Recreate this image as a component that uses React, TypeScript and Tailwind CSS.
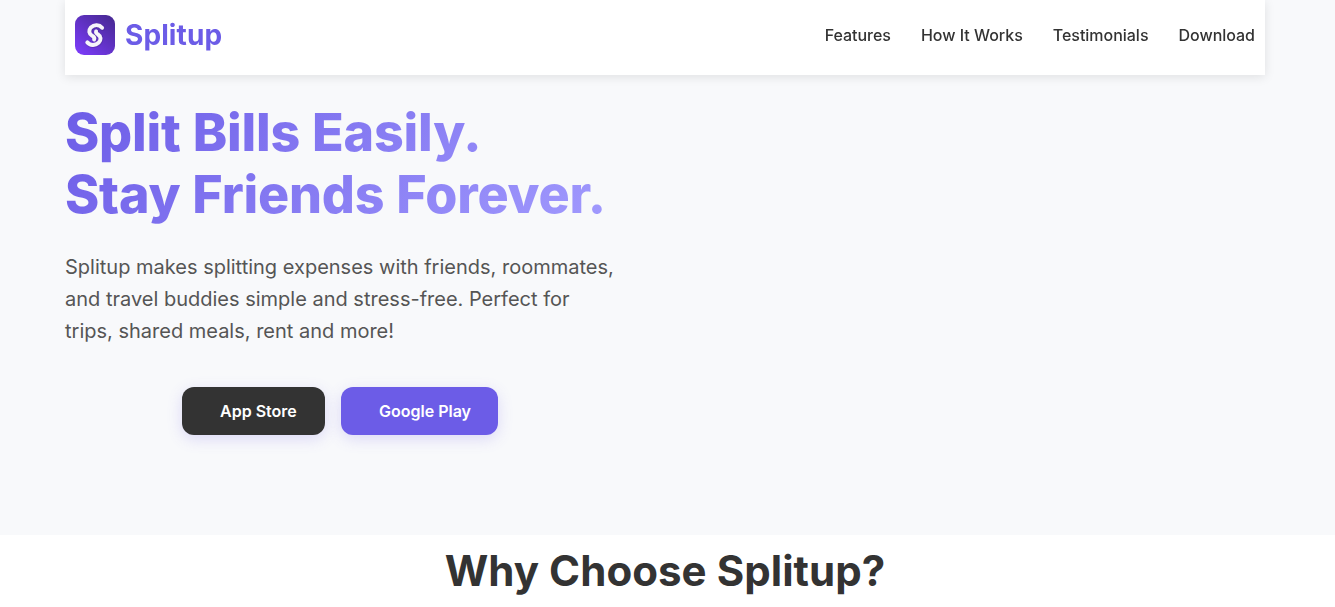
const navLinks = [
  { label: 'Features', href: '#features' },
  { label: 'How It Works', href: '#how-it-works' },
  { label: 'Testimonials', href: '#testimonials' },
  { label: 'Download', href: '#download' },
];

const stores = [
  { label: 'App Store', className: 'w-[143px] bg-[#333333]' },
  { label: 'Google Play', className: 'w-[157px] bg-[#6c5ce7]' },
];

const Logo = () => (
  <svg className="w-10 h-10" viewBox="0 0 40 40" fill="none">
    <defs>
      <linearGradient id="logo-bg" x1="4" y1="38" x2="34" y2="2" gradientUnits="userSpaceOnUse">
        <stop offset="0" stopColor="#7a3bf6" />
        <stop offset="1" stopColor="#4a2a98" />
      </linearGradient>
      <filter id="logo-shadow" x="-30%" y="-30%" width="160%" height="160%">
        <feDropShadow dx="0.4" dy="0.4" stdDeviation="0.6" floodColor="#1d0c4d" floodOpacity="0.5" />
      </filter>
    </defs>
    <rect width="40" height="40" rx="9" fill="url(#logo-bg)" />
    <g filter="url(#logo-shadow)" stroke="#f6f4fa" strokeWidth="3.9" strokeLinecap="round" strokeLinejoin="round">
      <path d="M27.1 12.7C24.2 9.4 19 9.4 16 12.3C13.2 15.4 14 18.8 17 20.6C18.9 21.7 19.8 22.7 19.1 24.4" />
      <path d="M21.1 16.4C20.6 17.8 21.4 18.4 23 19.5C26 21.4 26.4 24.9 23.6 27.7C20.4 30.8 15.2 30.7 12.3 27.4" />
    </g>
  </svg>
);

const Header = () => (
  <header className="relative z-10 mx-auto flex h-[75px] w-[1200px] items-start justify-between bg-white/95 px-2.5 pt-[15px] shadow-[0_2px_10px_rgba(0,0,0,0.1)] backdrop-blur-[10px]">
    <a href="#" className="flex h-10 items-center gap-2.5 text-[28px] font-bold tracking-[0.1px] text-[#6c5ce7]">
      <Logo />
      Splitup
    </a>
    <nav className="flex h-10 items-center gap-[30px]">
      {navLinks.map((link) => (
        <a key={link.label} href={link.href} className="font-medium tracking-[-0.02px] text-[#333333]">
          {link.label}
        </a>
      ))}
    </nav>
  </header>
);

const Hero = () => (
  <section className="mx-auto h-[460px] w-[1200px] pt-[27px]">
    <div className="w-[550px]">
      <h1 className="mb-6 bg-linear-[135deg,#6c5ce7,#a29bfe] bg-clip-text text-[52px] leading-[1.2] font-extrabold tracking-[-0.22px] text-transparent [word-spacing:0.8px]">
        Split Bills Easily.
        <br />
        Stay Friends Forever.
      </h1>
      <p className="mb-10 text-xl leading-8 text-[#555555]">
        Splitup makes splitting expenses with friends, roommates, and travel buddies simple and stress-free. Perfect for
        trips, shared meals, rent and more!
      </p>
      <div className="flex justify-center gap-4">
        {stores.map((store) => (
          <a
            key={store.label}
            href="#download"
            className={`flex h-12 items-center rounded-xl pl-[38px] font-semibold whitespace-nowrap text-white shadow-[0_4px_15px_rgba(108,92,231,0.2)] ${store.className}`}
          >
            {store.label}
          </a>
        ))}
      </div>
    </div>
  </section>
);

export default function App() {
  return (
    <div className="h-[607px] overflow-hidden bg-[#f8f9fb] font-['Inter',sans-serif] text-[#333333]">
      <div className="pr-[5px]">
        <Header />
        <Hero />
      </div>
      <section id="features" className="h-[72px] bg-white pt-[11px] pr-[5px]">
        <h2 className="text-center text-[42px] leading-[50px] font-bold tracking-[0.05px]">Why Choose Splitup?</h2>
      </section>
    </div>
  );
}
